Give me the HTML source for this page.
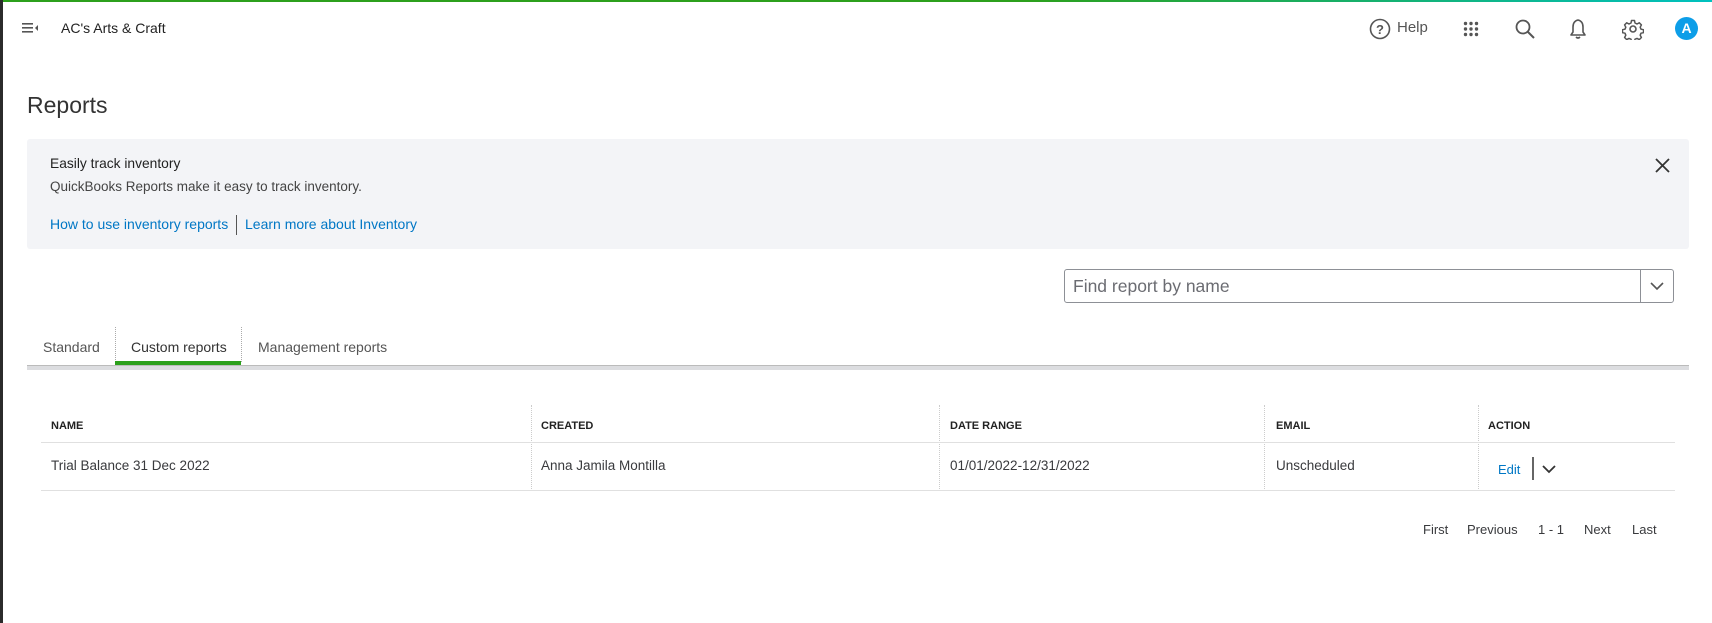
<!DOCTYPE html>
<html><head><style>
*{margin:0;padding:0;box-sizing:border-box}
body{width:1712px;height:623px;background:#fff;font-family:"Liberation Sans",sans-serif;color:#393a3d;position:relative;overflow:hidden}
.a{position:absolute;white-space:nowrap}
.blue{color:#0077c5}
.th{font-size:11px;font-weight:bold;color:#222;top:420px}
.td{font-size:13.5px;color:#393a3d;top:458px}
.vd{position:absolute;top:405px;height:86px;border-left:1px dotted #ccc}
.pg{font-size:13px;top:522px;color:#393a3d}
</style></head><body>
<div class="a" style="left:0;top:0;width:1712px;height:2px;background:linear-gradient(90deg,#2ca01c,#2ca01c 60%,#00c1bf)"></div>
<div class="a" style="left:0;top:0;width:3px;height:623px;background:#2b2b2b"></div>
<svg class="a" style="left:22px;top:21px" width="18" height="14"><g fill="#555"><rect x="0" y="2" width="11" height="1.6"/><rect x="0" y="6" width="11" height="1.6"/><rect x="0" y="10" width="11" height="1.6"/><path d="M16 4 L13 7 L16 10Z"/></g></svg>
<div class="a" style="left:61px;top:20px;font-size:14px;color:#222">AC's Arts &amp; Craft</div>
<svg class="a" style="left:1369px;top:18px" width="22" height="22"><circle cx="11" cy="11" r="9.5" fill="none" stroke="#555" stroke-width="1.6"/><text x="11" y="16" text-anchor="middle" font-size="13" font-weight="bold" fill="#555" font-family="Liberation Sans">?</text></svg>
<div class="a" style="left:1397px;top:19px;font-size:15px;color:#555">Help</div>
<svg class="a" style="left:1463px;top:21px" width="16" height="16"><g fill="#555"><circle cx="2.5" cy="2.5" r="1.7"/><circle cx="8" cy="2.5" r="1.7"/><circle cx="13.5" cy="2.5" r="1.7"/><circle cx="2.5" cy="8" r="1.7"/><circle cx="8" cy="8" r="1.7"/><circle cx="13.5" cy="8" r="1.7"/><circle cx="2.5" cy="13.5" r="1.7"/><circle cx="8" cy="13.5" r="1.7"/><circle cx="13.5" cy="13.5" r="1.7"/></g></svg>
<svg class="a" style="left:1514px;top:18px" width="22" height="22"><circle cx="9" cy="9" r="6.5" fill="none" stroke="#555" stroke-width="1.8"/><path d="M14 14 L20 20" stroke="#555" stroke-width="2"/></svg>
<svg class="a" style="left:1568px;top:18px" width="20" height="22"><path d="M10 2 C6 3 5 6 5 9 V14 L3 17 H17 L15 14 V9 C15 6 14 3 10 2Z M8 19 Q10 21 12 19" fill="none" stroke="#555" stroke-width="1.6" stroke-linejoin="round"/></svg>
<svg class="a" style="left:1622px;top:18px" width="22" height="22"><circle cx="11" cy="11" r="3" fill="none" stroke="#555" stroke-width="1.6"/><path d="M9.5 2.5h3l.5 2.5 2 1 2.3-1.2 2.1 2.1-1.2 2.3.8 2 2.5.5v3l-2.5.5-.8 2 1.2 2.3-2.1 2.1-2.3-1.2-2 .8-.5 2.5h-3l-.5-2.5-2-.8-2.300 1.2-2.1-2.1 1.2-2.3-.8-2-2.5-.5v-3l2.5-.5.8-2-1.2-2.3 2.1-2.1 2.3 1.2 2-1z" fill="none" stroke="#555" stroke-width="1.5" stroke-linejoin="round"/></svg>
<div class="a" style="left:1675px;top:17px;width:23px;height:23px;border-radius:50%;background:#0d9ee8;color:#fff;font-weight:bold;font-size:14px;text-align:center;line-height:23px">A</div>
<div class="a" style="left:27px;top:92px;font-size:23px;color:#333">Reports</div>
<div class="a" style="left:27px;top:139px;width:1662px;height:110px;background:#f3f4f7;border-radius:3px"></div>
<div class="a" style="left:50px;top:156px;font-size:13.8px;color:#222">Easily track inventory</div>
<div class="a" style="left:50px;top:179px;font-size:13.5px;color:#444">QuickBooks Reports make it easy to track inventory.</div>
<div class="a blue" style="left:50px;top:216px;font-size:14px">How to use inventory reports</div>
<div class="a" style="left:236px;top:215px;width:1px;height:20px;background:#555"></div>
<div class="a blue" style="left:245px;top:216px;font-size:14px">Learn more about Inventory</div>
<svg class="a" style="left:1655px;top:158px" width="15" height="15"><path d="M1 1L14 14M14 1L1 14" stroke="#333" stroke-width="1.8"/></svg>
<div class="a" style="left:1064px;top:269px;width:610px;height:34px;border:1px solid #8d9096;border-radius:3px"></div>
<div class="a" style="left:1640px;top:270px;width:1px;height:32px;background:#8d9096"></div>
<div class="a" style="left:1073px;top:276px;font-size:17.5px;color:#6b6c72">Find report by name</div>
<svg class="a" style="left:1650px;top:281px" width="14" height="10"><path d="M1 2L7 8L13 2" fill="none" stroke="#555" stroke-width="1.6"/></svg>
<div class="a" style="left:43px;top:339px;font-size:14px;color:#555">Standard</div>
<div class="a" style="left:115px;top:327px;height:35px;border-left:1px dotted #aaa"></div>
<div class="a" style="left:131px;top:339px;font-size:14px;color:#333">Custom reports</div>
<div class="a" style="left:241px;top:327px;height:35px;border-left:1px dotted #aaa"></div>
<div class="a" style="left:258px;top:339px;font-size:14px;color:#555">Management reports</div>
<div class="a" style="left:27px;top:365px;width:1662px;height:5px;background:#dcdde0;border-top:1px solid #bbb"></div>
<div class="a" style="left:115px;top:361px;width:126px;height:4px;background:#2ca01c"></div>
<div class="a th" style="left:51px">NAME</div>
<div class="a th" style="left:541px">CREATED</div>
<div class="a th" style="left:950px">DATE RANGE</div>
<div class="a th" style="left:1276px">EMAIL</div>
<div class="a th" style="left:1488px">ACTION</div>
<div class="vd" style="left:531px"></div><div class="vd" style="left:939px"></div><div class="vd" style="left:1264px"></div><div class="vd" style="left:1478px"></div>
<div class="a" style="left:41px;top:442px;width:1634px;height:1px;background:#e0e0e0"></div>
<div class="a" style="left:41px;top:490px;width:1634px;height:1px;background:#e0e0e0"></div>
<div class="a td" style="left:51px">Trial Balance 31 Dec 2022</div>
<div class="a td" style="left:541px">Anna Jamila Montilla</div>
<div class="a td" style="left:950px">01/01/2022-12/31/2022</div>
<div class="a td" style="left:1276px">Unscheduled</div>
<div class="a blue" style="left:1498px;top:462px;font-size:13px">Edit</div>
<div class="a" style="left:1532px;top:457px;width:2px;height:23px;background:#666"></div>
<svg class="a" style="left:1542px;top:464px" width="14" height="10"><path d="M1 2L7 8L13 2" fill="none" stroke="#333" stroke-width="1.8"/></svg>
<div class="a pg" style="left:1423px">First</div>
<div class="a pg" style="left:1467px">Previous</div>
<div class="a pg" style="left:1538px">1 - 1</div>
<div class="a pg" style="left:1584px">Next</div>
<div class="a pg" style="left:1632px">Last</div>
</body></html>
